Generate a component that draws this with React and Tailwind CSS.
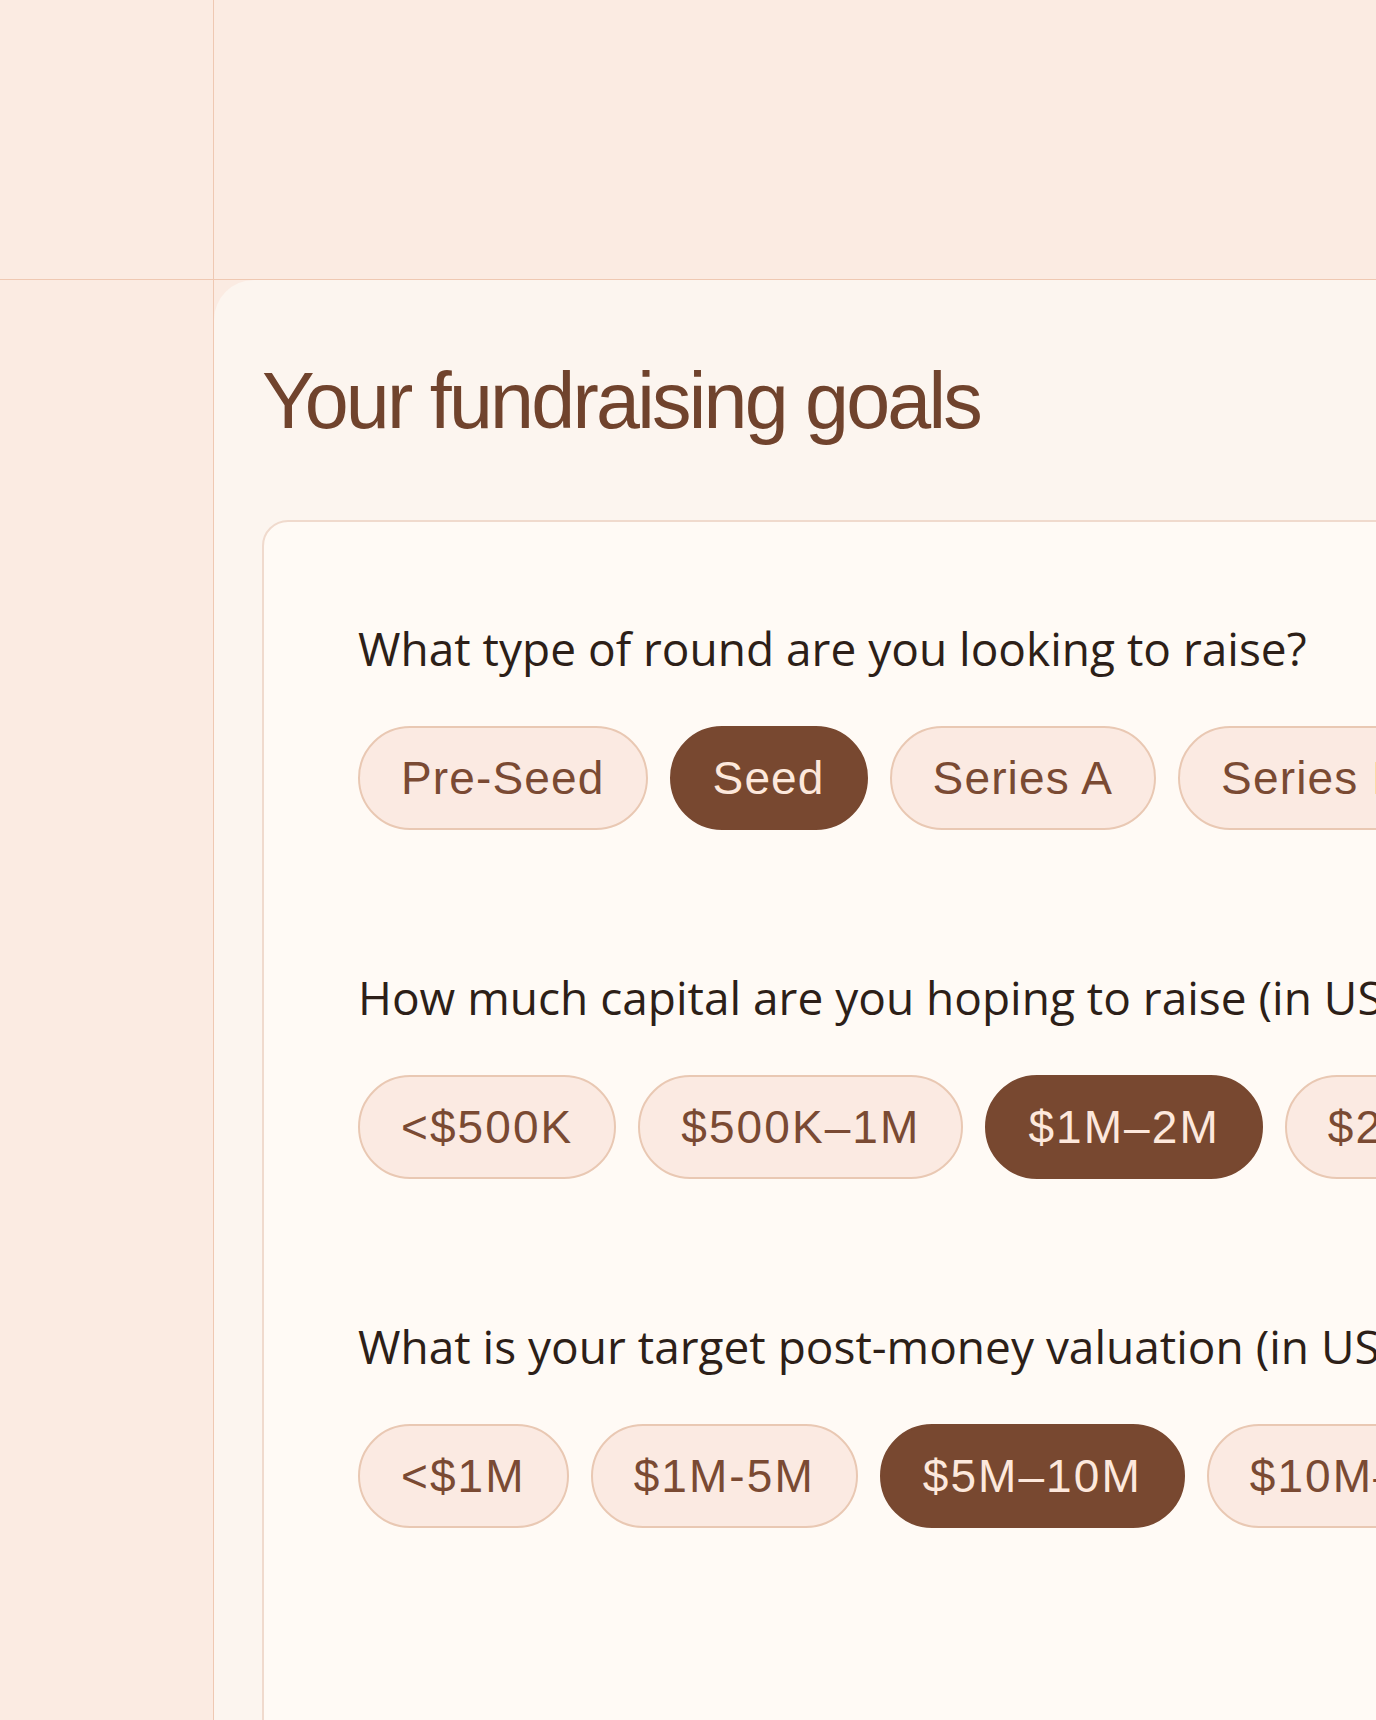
import React from "react";

const rows = [
  {
    q: "What type of round are you looking to raise?",
    opts: ["Pre-Seed", "Seed", "Series A", "Series B", "Series C+"],
    sel: 1,
    numeric: false,
  },
  {
    q: "How much capital are you hoping to raise (in USD)?",
    opts: ["<$500K", "$500K–1M", "$1M–2M", "$2M–5M", "$5M+"],
    sel: 2,
    numeric: true,
  },
  {
    q: "What is your target post-money valuation (in USD)?",
    opts: ["<$1M", "$1M-5M", "$5M–10M", "$10M–25M", "$25M+"],
    sel: 2,
    numeric: true,
  },
];

function Pill({ label, active, numeric }) {
  const base =
    "shrink-0 h-[104px] px-[41px] flex items-center rounded-full border-2 text-[46px] leading-none whitespace-nowrap";
  const color = active
    ? " border-[#784830] bg-[#784830] text-[#fde8dc]"
    : " border-[#e9c8b3] bg-[#fbeae2] text-[#7a4a33]";
  const track = numeric ? " tracking-[0.045em]" : " tracking-[0.025em]";
  return (
    <div
      className={base + color + track}
      style={{ fontFamily: '"Liberation Sans", Arial, sans-serif' }}
    >
      {label}
    </div>
  );
}

export default function App() {
  return (
    <div className="w-[1376px] h-[1720px] overflow-hidden bg-[#fbebe2] grid grid-cols-[214px_1fr] grid-rows-[280px_1fr]">
      <div className="border-r border-b border-[#efc8b2]" />
      <div className="border-b border-[#efc8b2]" />
      <div className="border-r border-[#efc8b2]" />
      <div className="bg-[#fcf5ef] rounded-tl-[40px] pl-[48px] pt-[81px] overflow-hidden">
        <h1
          className="text-[79px] leading-none tracking-[-0.035em] text-[#70432d] whitespace-nowrap"
          style={{ fontFamily: '"Liberation Sans", Arial, sans-serif' }}
        >
          Your fundraising goals
        </h1>
        <div className="mt-[80px] w-[1400px] h-[1300px] bg-[#fffaf5] border-2 border-[#f0dacd] rounded-[26px] pl-[94px] pt-[103px] flex flex-col gap-[144px]">
          {rows.map((r, i) => (
            <div key={i} className="flex flex-col">
              <p
                className="text-[46px] leading-none text-[#2d1f18] whitespace-nowrap"
                style={{ fontFamily: '"Open Sans", sans-serif' }}
              >
                {r.q}
              </p>
              <div className="mt-[55px] flex flex-nowrap gap-[22px]">
                {r.opts.map((o, j) => (
                  <Pill key={j} label={o} active={j === r.sel} numeric={r.numeric} />
                ))}
              </div>
            </div>
          ))}
        </div>
      </div>
    </div>
  );
}
